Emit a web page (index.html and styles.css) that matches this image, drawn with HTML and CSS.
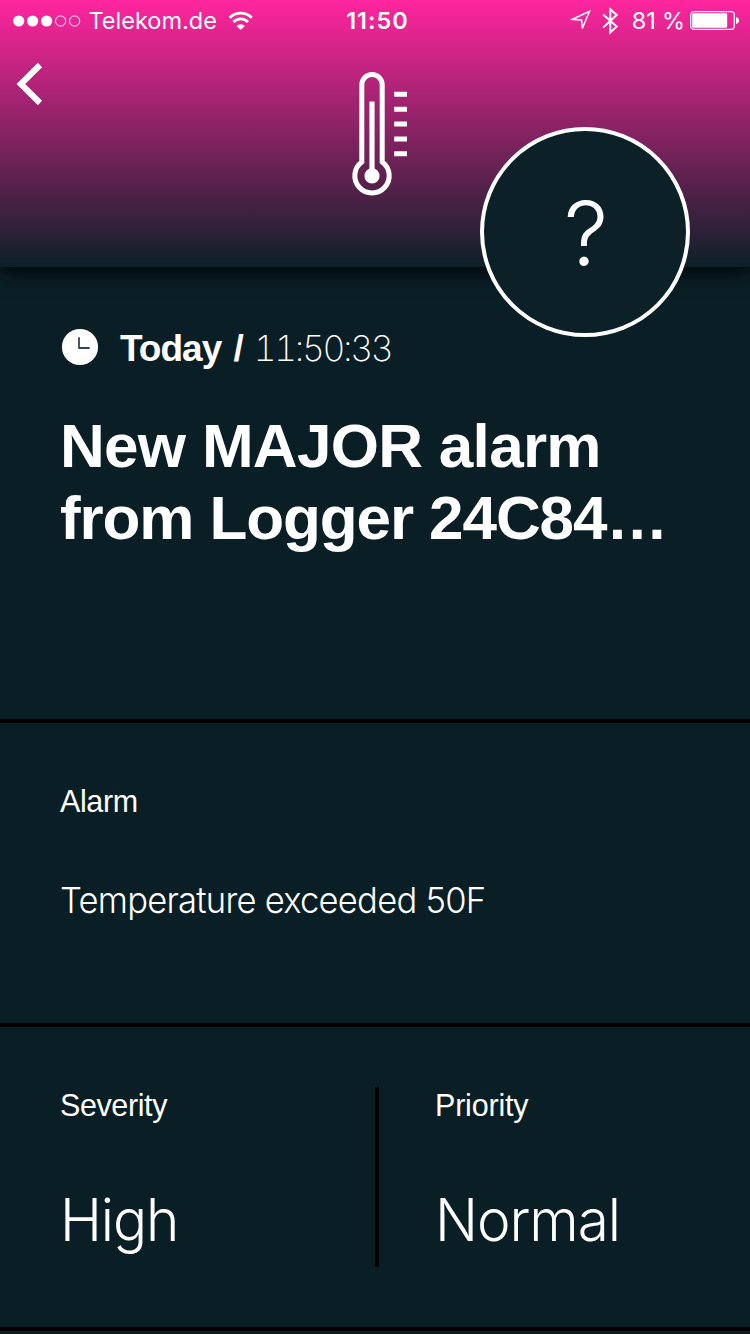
FILE: index.html
```html
<!DOCTYPE html>
<html lang="en">
<head>
<meta charset="utf-8">
<title>Alarm details</title>
<link rel="stylesheet" href="styles.css">
</head>
<body>
<main class="screen">
  <header class="header">
    <div class="status">
      <div class="status-left">
        <svg class="signal" width="68" height="12" viewBox="0 0 68 12">
          <g fill="#fff"><circle cx="5.7" cy="6" r="5.6"/><circle cx="19.6" cy="6" r="5.6"/><circle cx="33.6" cy="6" r="5.6"/></g>
          <g fill="none" stroke="#fff"><circle cx="47.6" cy="6" r="5.1"/><circle cx="61.6" cy="6" r="5.1"/></g>
        </svg>
        <span class="carrier">Telekom.de</span>
        <svg class="wifi" width="26" height="20" viewBox="0 0 26 20">
          <g fill="none" stroke="#fff" stroke-width="2.8"><path d="M1.6 6.7a15.6 15.6 0 0 1 22.2 0"/><path d="M5.4 10.9a10.2 10.2 0 0 1 14.6 0"/></g>
          <path fill="#fff" d="M8.5 14.9a6.1 6.1 0 0 1 8.4 0L12.7 19z"/>
        </svg>
      </div>
      <span class="clock">11:50</span>
      <div class="status-right">
        <svg class="location" width="22" height="22" viewBox="0 0 22 22"><path fill="none" stroke="#fff" stroke-width="1.5" d="M2.5 9.3 19.5 1.3 12.3 18.5 11.6 9.9z"/></svg>
        <svg class="bluetooth" width="17" height="28" viewBox="0 0 17 28"><path fill="none" stroke="#fff" stroke-width="2" d="M1.2 7.4 14.7 19.6 8.3 25.5V2.2L14.7 8.1 1.2 20.5"/></svg>
        <span class="percent">81 %</span>
        <svg class="battery" width="50" height="20" viewBox="0 0 50 20">
          <rect x=".7" y=".7" width="43.6" height="17.6" rx="3" fill="none" stroke="#fff" stroke-width="1.2"/>
          <rect x="2.2" y="2.2" width="35" height="14.6" rx="1.4" fill="#fff"/>
          <path fill="#fff" d="M46 6q3 .8 3 3.5T46 13z"/>
        </svg>
      </div>
    </div>
    <svg class="back" width="28" height="44" viewBox="0 0 28 44"><path fill="none" stroke="#fff" stroke-width="6" d="M25 3 5.8 22 25 41"/></svg>
    <svg class="thermometer" width="60" height="128" viewBox="0 0 60 128">
      <path fill="none" stroke="#fff" stroke-width="5" d="M11.8 91.9V14.7a10.2 10.2 0 0 1 20.4 0V91.9A17.2 17.2 0 1 1 11.8 91.9z"/>
      <path fill="none" stroke="#fff" stroke-width="5.2" d="M22 31.5V105"/>
      <circle cx="22" cy="105.8" r="7.6" fill="#fff"/>
      <path fill="none" stroke="#fff" stroke-width="5" d="M44.2 24.3H57M44.2 39.2H57M44.2 54H57M44.2 68.9H57M44.2 83.7H57"/>
    </svg>
    <div class="badge"><span class="badge-mark">?</span></div>
  </header>
  <section class="summary">
    <div class="time">
      <svg class="time-icon" width="38" height="38" viewBox="0 0 38 38"><circle cx="19" cy="19" r="18.1" fill="#fff"/><path fill="none" stroke="#34474d" stroke-width="1.8" stroke-linecap="round" stroke-linejoin="round" d="M18 10V20H28"/></svg>
      <span class="day">Today /</span><span class="hour">11:50:33</span>
    </div>
    <h1 class="title"><span class="title-first">New MAJOR alarm</span><br><span class="title-second">from Logger 24C84…</span></h1>
  </section>
  <section class="alarm">
    <h2 class="label label-alarm">Alarm</h2>
    <p class="message">Temperature exceeded 50F</p>
  </section>
  <section class="levels">
    <div class="level">
      <h2 class="label label-severity">Severity</h2>
      <p class="value value-high">High</p>
    </div>
    <div class="level level-priority">
      <h2 class="label label-priority">Priority</h2>
      <p class="value value-normal">Normal</p>
    </div>
  </section>
</main>
</body>
</html>
```
FILE: styles.css
```css
* { box-sizing: border-box; }
body { margin: 0; background: #0a1e26; }
h1, h2, p { margin: 0; font-weight: 400; }
svg { display: block; flex: none; }
.screen {
  width: 750px;
  height: 1334px;
  overflow: hidden;
  color: #fff;
  background: #0a1e26;
  font-family: "Liberation Sans", Arial, sans-serif;
  white-space: nowrap;
}
.header {
  position: relative;
  height: 267px;
  background: linear-gradient(#ff259e, #0c2027);
  box-shadow: 0 4px 18px rgba(0, 0, 0, .95);
}
.status {
  display: grid;
  grid-template-columns: 1fr auto 1fr;
  height: 41px;
  padding: 0 10px 0 13px;
  font: 400 23.5px/42px Inter, sans-serif;
}
.status-left, .status-right { display: flex; align-items: center; }
.status-right { justify-content: flex-end; }
.carrier { margin-left: 7.5px; }
.wifi { margin-left: 11px; margin-top: -1px; }
.clock { padding-left: 2px; font-weight: 600; letter-spacing: 1px; }
.location { margin-top: -1px; }
.bluetooth { margin-left: 10px; }
.percent { margin-left: 13px; letter-spacing: -.15px; }
.battery { margin-left: 5px; }
.back { position: absolute; left: 15px; top: 62px; }
.thermometer { position: absolute; left: 350px; top: 70px; }
.badge {
  position: absolute;
  left: 480px;
  top: 127px;
  display: flex;
  justify-content: center;
  width: 210px;
  height: 210px;
  border: 4px solid #fff;
  border-radius: 50%;
  background: #0c2027;
}
.badge-mark { padding-left: 2px; font: 300 88px/204px Inter, sans-serif; }
.summary { height: 456px; padding: 60px 60px 0; border-bottom: 4px solid #000; }
.time { display: flex; align-items: center; height: 42px; margin-bottom: 41px; }
.time-icon { margin: -2px 21px 0 1px; }
.day { padding-top: 2px; font-size: 37px; font-weight: 700; line-height: 42px; letter-spacing: -1px; word-spacing: 3px; }
.hour {
  margin-left: 11px;
  padding-top: 2px;
  font: 250 35.5px/42px Inter, sans-serif;
  font-variant-numeric: tabular-nums;
  letter-spacing: -2.4px;
}
.title { font-size: 62px; font-weight: 700; line-height: 71.5px; }
.title-first { letter-spacing: -.7px; }
.title-second { letter-spacing: -1.1px; }
.alarm { height: 304px; padding: 60px 60px 0; border-bottom: 4px solid #000; }
.label { height: 36px; font-size: 30.5px; line-height: 37px; letter-spacing: -.4px; }
.label-priority { letter-spacing: -.2px; }
.message {
  margin-top: 59px;
  font: 300 36px/45px Inter, sans-serif;
  letter-spacing: -.8px;
  transform: scaleX(.96);
  transform-origin: left;
}
.levels { display: flex; height: 304px; padding: 60px 0; border-bottom: 4px solid #000; }
.level { width: 375px; padding-left: 60px; }
.level-priority { padding-left: 56px; border-left: 4px solid #000; }
.value {
  margin-top: 61px;
  font: 300 59px/72px Inter, sans-serif;
  letter-spacing: -1.1px;
  transform: scaleX(.96);
  transform-origin: left;
}
```
